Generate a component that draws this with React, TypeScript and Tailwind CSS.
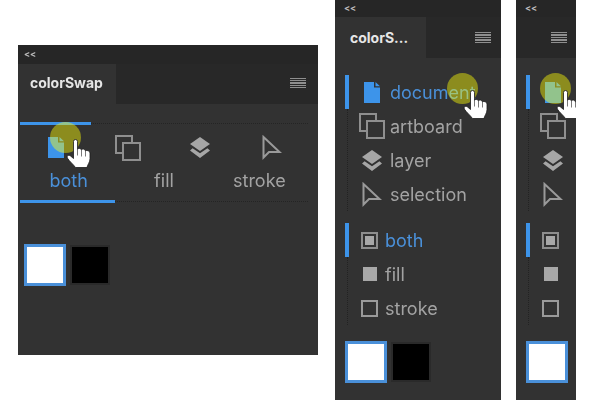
import React from "react";

const Doc = ({ c = "#3d94ea" }: { c?: string }) => (
  <svg width="16" height="21" viewBox="0 0 16 21"><path d="M0 0h10v5.5h6V21H0zM11.5 0L16 4.2h-4.5z" fill={c} /></svg>
);
const Artboard = () => (
  <svg width="26" height="26" viewBox="0 0 26 26" fill="none" stroke="#8f8f8f" strokeWidth="2"><path d="M8 18H1V1h16v7" /><rect x="8" y="8" width="17" height="17" /></svg>
);
const Layer = () => (
  <svg width="20" height="21" viewBox="0 0 20 21" fill="#a6a6a6"><path d="M10 0l10 7-10 7L0 7z" /><path d="M2.6 11.2L10 16.3l7.4-5.1L20 13.5 10 21 0 13.5z" /></svg>
);
const Arrow = () => (
  <svg width="20" height="25" viewBox="0 0 20 25" fill="none" stroke="#9a9a9a" strokeWidth="2"><path d="M1.5 2v20.5l5.5-5.5h10.5z" /></svg>
);
const Both = () => (
  <div className="w-[17px] h-[17px] border-2 border-[#8e8e8e] p-[2px]"><div className="w-full h-full bg-[#a8a8a8]" /></div>
);
const Fill = () => <div className="w-[14px] h-[14px] bg-[#a8a8a8]" />;
const Stroke = () => <div className="w-[17px] h-[17px] border-2 border-[#9a9a9a]" />;

const Hamburger = () => (
  <div className="flex flex-col gap-[1px] w-[16px]">
    {[0, 1, 2, 3, 4].map((i) => <div key={i} className="h-[1.4px] bg-[#8f8f8f]" />)}
  </div>
);

const Hand = () => (
  <svg width="25" height="29" viewBox="-0.5 -0.5 25 29">
    <path d="M7 2a2 2 0 0 1 4 0v8c.5-1.6 4-1.4 4 .5 .5-1.4 4-1.2 4 1 .6-1 4.5-.6 4.5 2V19c0 4-2.500 6-3 9H9c-2-3-6-6-8.200-9.500C0 16.500 2 15 3.500 16L7 19z" fill="#fff" stroke="#1a1a1a" strokeWidth="0.8" />
    <path d="M11 10v6M15 10.500V17M19 11.500V17" stroke="#555" strokeWidth="0.8" fill="none" />
  </svg>
);

const Cursor = ({ cx, cy }: { cx: string; cy: string }) => (
  <div className={`absolute ${cx} ${cy} w-[31px] h-[31px]`}>
    <div className="absolute inset-0 rounded-full bg-[#707000] mix-blend-screen" />
    <div className="absolute inset-0 rounded-full bg-[#ffff99] mix-blend-multiply" />
    <div className="absolute left-[16px] top-[17px]"><Hand /></div>
  </div>
);

const Swatches = ({ black = true }: { black?: boolean }) => (
  <div className="flex items-center gap-[4px]">
    <div className="w-[42px] h-[42px] bg-white border-[3px] border-[#4a90d9]" />
    {black && <div className="w-[40px] h-[40px] bg-black border-2 border-[#2a2a2a]" />}
  </div>
);

function Rows({ items, labels, iconW, active }: { items: { icon: React.ReactNode; label: string }[]; labels: boolean; iconW: string; active: string }) {
  return (
    <div className="flex">
      <div className="flex flex-col items-center w-[4px]">
        <div className="w-[4px] h-[34px] shrink-0 bg-[#3d94ea]" />
        <div className="flex-1 border-l border-dotted border-[#222]" />
      </div>
      <div className="ml-[10px] flex flex-col">
        {items.map((it) => (
          <div key={it.label} className="flex items-center h-[34px] gap-[5px]">
            <div className={`${iconW} flex justify-center shrink-0`}>{it.icon}</div>
            {labels && <span className={`pt-[2px] text-[18px] leading-none ${it.label === active ? "text-[#4a90d9]" : "text-[#a3a3a3]"}`}>{it.label}</span>}
          </div>
        ))}
      </div>
    </div>
  );
}

function Narrow({ labels, width, cx, cy }: { labels: boolean; width: string; cx: string; cy: string }) {
  return (
    <div className={`relative ${width} h-full bg-[#323232] overflow-hidden flex flex-col shrink-0`}>
      <div className="h-[17px] pb-[2px] bg-[#262626] flex items-center pl-[9px] text-[9px] leading-none font-bold text-[#bdbdbd]">&lt;&lt;</div>
      <div className="h-[41px] bg-[#282828] flex items-center">
        {labels ? (
          <div className="w-[91px] h-full bg-[#323232] flex items-center pl-[15px] text-[14px] font-bold text-[#e6e6e6]">colorS...</div>
        ) : null}
        <div className={labels ? "ml-[49px]" : "ml-[35px]"}><Hamburger /></div>
      </div>
      <div className="pl-[10px] pt-[17px] flex flex-col">
        <Rows labels={labels} iconW="w-[26px]" active="document" items={[
          { icon: <Doc />, label: "document" },
          { icon: <Artboard />, label: "artboard" },
          { icon: <Layer />, label: "layer" },
          { icon: <Arrow />, label: "selection" },
        ]} />
        <div className="mt-[12px]">
          <Rows labels={labels} iconW="w-[21px]" active="both" items={[
            { icon: <Both />, label: "both" },
            { icon: <Fill />, label: "fill" },
            { icon: <Stroke />, label: "stroke" },
          ]} />
        </div>
        <div className="mt-[16px]"><Swatches black={labels} /></div>
      </div>
      <Cursor cx={cx} cy={cy} />
    </div>
  );
}

export default function App() {
  return (
    <div className="w-[600px] h-[400px] bg-white flex overflow-hidden" style={{ fontFamily: "Inter, 'Liberation Sans', sans-serif" }}>
      <div className="relative ml-[18px] mt-[45px] w-[300px] h-[310px] bg-[#323232] shrink-0 flex flex-col">
        <div className="h-[19px] bg-[#262626] flex items-center pl-[6px] pb-[3px] text-[9px] leading-none font-bold text-[#bdbdbd]">&lt;&lt;</div>
        <div className="h-[40px] bg-[#282828] flex items-center justify-between pr-[12px]">
          <div className="w-[98px] h-full bg-[#323232] flex items-center pl-[12px] pb-[3px] text-[14px] font-bold text-[#e6e6e6]">colorSwap</div>
          <div className="pb-[2px]"><Hamburger /></div>
        </div>
        <div className="mx-[2px] mt-[18px] w-[288px] flex items-center">
          <div className="w-[71px] h-[3px] bg-[#3d94ea]" />
          <div className="flex-1 border-t border-dotted border-[#242424]" />
        </div>
        <div className="mx-[2px] w-[288px] h-[45px] grid grid-cols-4 items-center justify-items-center">
          <Doc /><Artboard /><Layer /><Arrow />
        </div>
        <div className="ml-[3px] w-[286px] h-[22px] mb-[8px] grid grid-cols-3 items-center justify-items-center text-[18px] leading-none text-[#a3a3a3]">
          <span className="text-[#4a90d9]">both</span><span>fill</span><span>stroke</span>
        </div>
        <div className="mx-[2px] w-[288px] flex items-center">
          <div className="w-[95px] h-[3px] bg-[#3d94ea]" />
          <div className="flex-1 border-t border-dotted border-[#242424]" />
        </div>
        <div className="ml-[6px] mt-[41px]"><Swatches /></div>
        <Cursor cx="left-[32px]" cy="top-[77px]" />
      </div>
      <div className="ml-[17px] h-full"><Narrow labels width="w-[166px]" cx="left-[112px]" cy="top-[73px]" /></div>
      <div className="ml-[15px] h-full"><Narrow labels={false} width="w-[60px]" cx="left-[24px]" cy="top-[73px]" /></div>
    </div>
  );
}
